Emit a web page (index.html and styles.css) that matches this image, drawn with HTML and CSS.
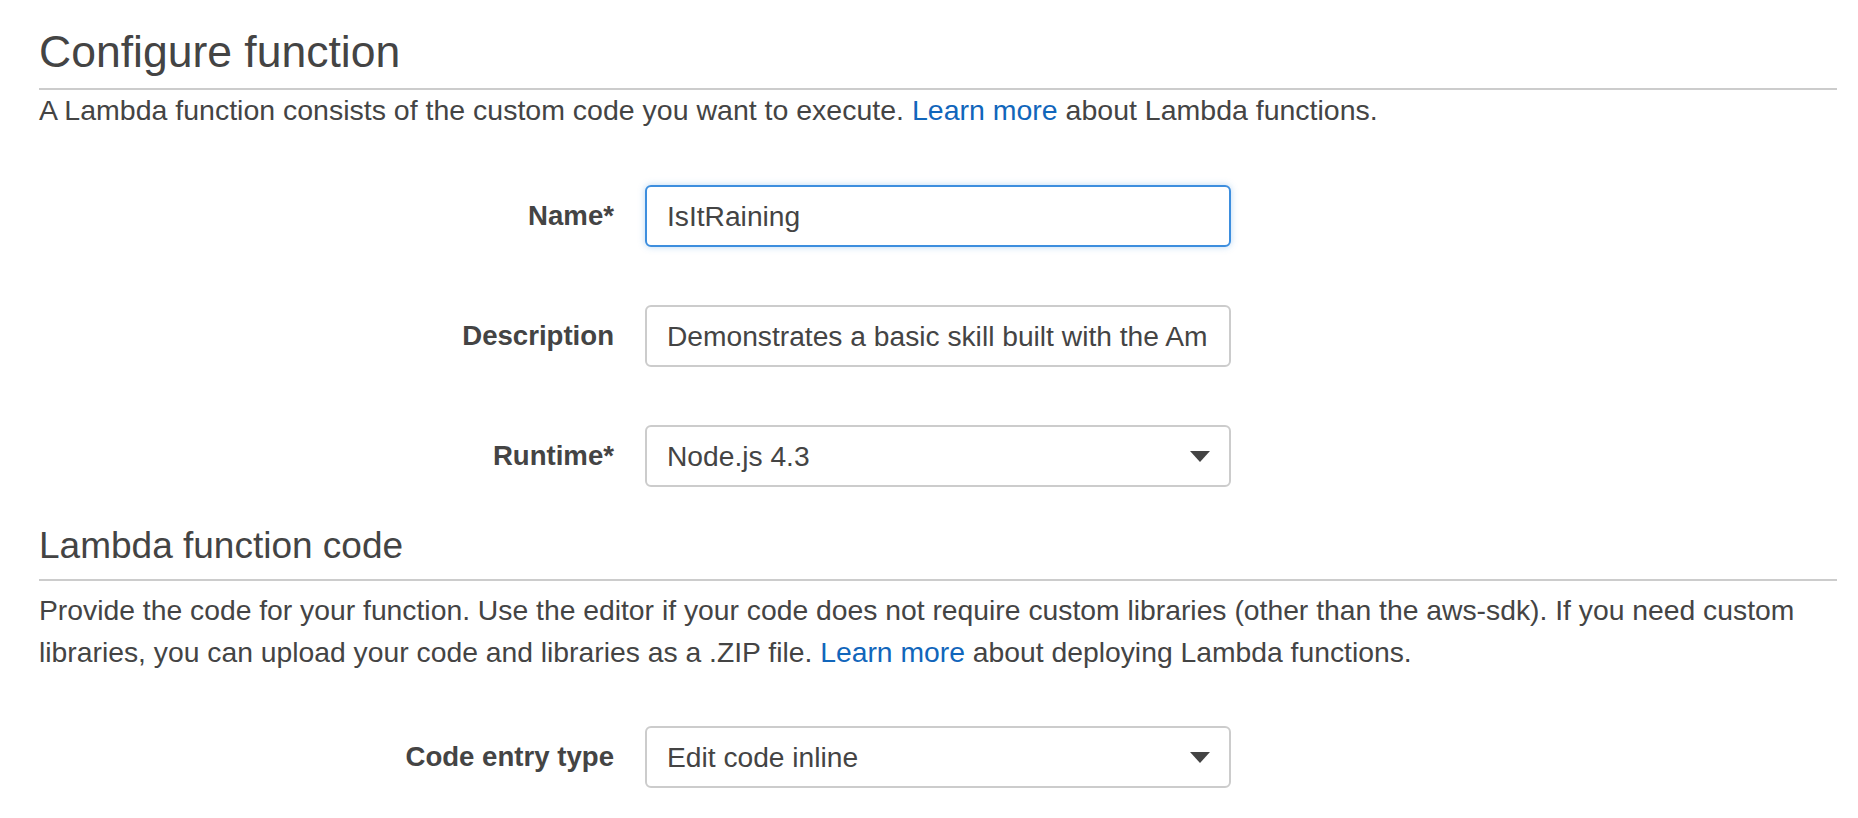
FILE: index.html
```html
<!DOCTYPE html>
<html lang="en">
<head>
<meta charset="utf-8">
<title>Configure function</title>
<link rel="stylesheet" href="styles.css">
</head>
<body>
<div class="page">
  <h1 class="section-title">Configure function</h1>
  <p class="intro">A Lambda function consists of the custom code you want to execute. <a href="#" class="link">Learn more</a> about Lambda functions.</p>

  <div class="form form-top">
    <label class="label" for="fn-name">Name*</label>
    <input class="field field-focused" id="fn-name" type="text" value="IsItRaining">

    <label class="label" for="fn-desc">Description</label>
    <input class="field field-desc" id="fn-desc" type="text" value="Demonstrates a basic skill built with the Amazon Alexa Skills Kit.">

    <span class="label">Runtime*</span>
    <button class="field select" type="button" role="combobox" aria-label="Runtime">
      <span class="select-value">Node.js 4.3</span>
      <svg class="caret" width="20" height="11" viewBox="0 0 20 11"><polygon points="0,0 20,0 10,11" fill="#444"/></svg>
    </button>
  </div>

  <h2 class="sub-title">Lambda function code</h2>
  <p class="help">Provide the code for your function. Use the editor if your code does not require custom libraries (other than the aws-sdk). If you need custom libraries, you can upload your code and libraries as a .ZIP file. <a href="#" class="link">Learn more</a> about deploying Lambda functions.</p>

  <div class="form form-bottom">
    <span class="label">Code entry type</span>
    <button class="field select" type="button" role="combobox" aria-label="Code entry type">
      <span class="select-value">Edit code inline</span>
      <svg class="caret" width="20" height="11" viewBox="0 0 20 11"><polygon points="0,0 20,0 10,11" fill="#444"/></svg>
    </button>
  </div>
</div>
</body>
</html>
```
FILE: styles.css
```css
html, body {
  margin: 0;
  padding: 0;
  background: #fff;
}

body {
  font-family: "Liberation Sans", Arial, Helvetica, sans-serif;
  color: #444;
}

.page {
  padding: 0 21px 0 39px;
}

.section-title {
  font-size: 44.5px;
  font-weight: normal;
  line-height: 50px;
  margin: 27px 0 0;
  padding-bottom: 11px;
  border-bottom: 2px solid #ccc;
}

.intro {
  font-size: 28.5px;
  line-height: 40px;
  margin: 0;
}

.link {
  color: #1166bb;
  text-decoration: none;
}

.form {
  display: grid;
  grid-template-columns: 575px 586px;
  column-gap: 31px;
  row-gap: 58px;
  align-items: center;
}

.form-top {
  margin-top: 55px;
}

.form-bottom {
  margin-top: 53px;
}

.label {
  text-align: right;
  font-weight: bold;
  font-size: 27.6px;
  line-height: 32px;
}

.field {
  display: block;
  box-sizing: border-box;
  width: 586px;
  height: 62px;
  margin: 0;
  border: 2px solid #ccc;
  border-radius: 6px;
  padding: 0 20px;
  font-family: "Liberation Sans", Arial, Helvetica, sans-serif;
  font-size: 28.2px;
  color: #444;
  background: #fff;
  outline: none;
}

.field-focused {
  border-color: #3d8ede;
  box-shadow: 0 0 7px rgba(61, 142, 222, 0.35);
}

.field-desc {
  padding-right: 22px;
}

.select {
  display: flex;
  align-items: center;
  justify-content: space-between;
  padding: 0 19px 0 20px;
  text-align: left;
  cursor: pointer;
}

.select-value {
  line-height: 34px;
}

.caret {
  display: block;
  flex: none;
}

.sub-title {
  font-size: 37px;
  font-weight: normal;
  line-height: 42px;
  margin: 38px 0 0;
  padding-bottom: 12px;
  border-bottom: 2px solid #ccc;
}

.help {
  font-size: 28.3px;
  line-height: 42px;
  margin: 8px 0 0;
}
```
